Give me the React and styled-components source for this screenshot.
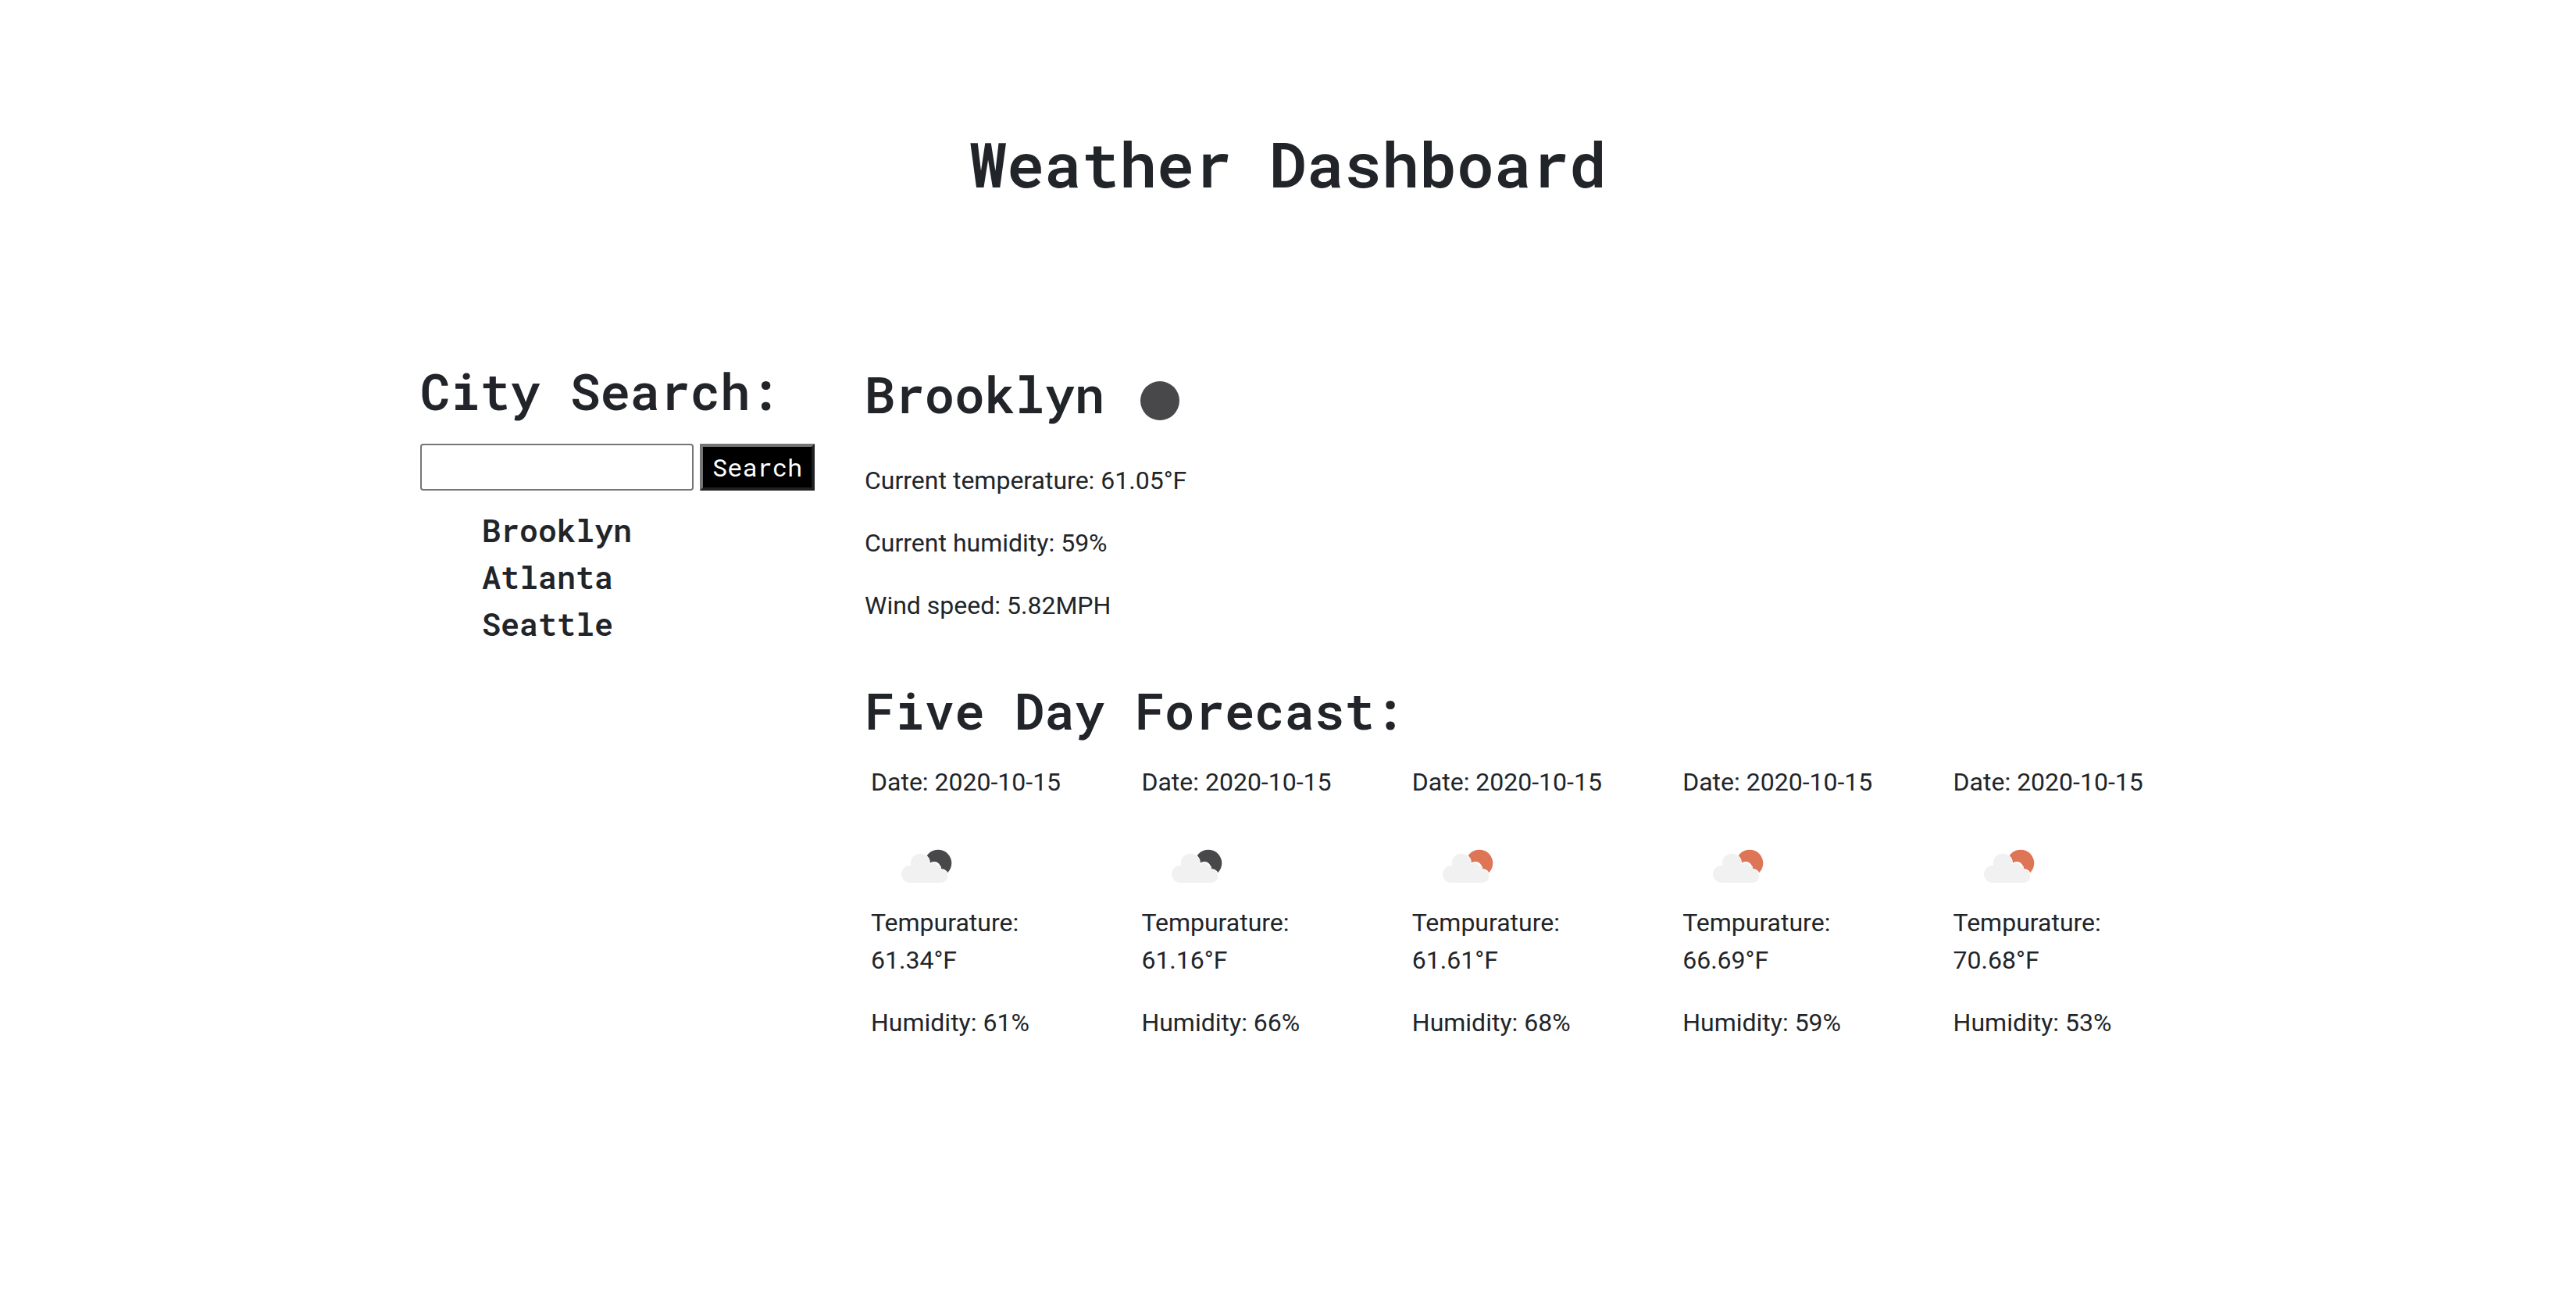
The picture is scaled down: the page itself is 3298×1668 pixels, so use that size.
import React, { useState } from "react";
import styled, { createGlobalStyle } from "styled-components";

const MONO = `"Roboto Mono", "DejaVu Sans Mono", monospace`;

const GlobalStyle = createGlobalStyle`
  *, *::before, *::after { box-sizing: border-box; }
  body {
    margin: 0;
    background: #fff;
    color: #212529;
    font-family: Roboto, sans-serif;
    font-size: 32px;
    line-height: 48px;
  }
  h1, h2, p, ul { margin: 0; padding: 0; }
`;

const PageHeader = styled.header`
  padding: 161px 32px 205px;
`;

const Title = styled.h1`
  font-family: ${MONO};
  font-size: 80px;
  font-weight: 600;
  line-height: 96px;
  text-align: center;
`;

const Container = styled.main`
  display: flex;
  max-width: 2280px;
  margin: 0 auto;
  padding: 0 2px 64px 29px;
`;

const Sidebar = styled.aside`
  flex: 0 0 569px;
`;

const Content = styled.div`
  flex: 1;
  min-width: 0;
`;

const Heading = styled.h2`
  font-family: ${MONO};
  font-size: 64px;
  font-weight: 600;
  line-height: 77px;
  margin-bottom: 29px;
`;

const SearchForm = styled.form`
  display: flex;
  gap: 8px;
  margin-bottom: 21px;
`;

const SearchInput = styled.input`
  width: 350px;
  height: 60px;
  padding: 2px 8px;
  border: 2px solid #767676;
  border-radius: 4px;
  background: #fff;
  color: inherit;
  font: inherit;
`;

const SearchButton = styled.button`
  height: 60px;
  padding: 0 12px;
  border: 4px solid;
  border-color: #767676 #212121 #212121 #767676;
  border-radius: 0;
  background: #000;
  color: #fff;
  font-family: ${MONO};
  font-size: 32px;
  line-height: 48px;
  cursor: pointer;
`;

const CityList = styled.ul`
  padding-left: 79px;
  list-style: none;
`;

const CityItem = styled.li`
  font-family: ${MONO};
  font-size: 40px;
  font-weight: 600;
  line-height: 60px;
`;

const CurrentWeather = styled.section`
  margin-bottom: 72px;
`;

const Reading = styled.p`
  margin-bottom: ${(p) => (p.$last ? 0 : 32)}px;
`;

const WeatherImage = styled.svg`
  width: 100px;
  height: 100px;
  margin-left: 21px;
  vertical-align: middle;
`;

const ForecastGrid = styled.div`
  display: grid;
  grid-template-columns: repeat(5, minmax(0, 1fr));
  column-gap: 60px;
  padding-left: 8px;
`;

const DayIcon = styled(WeatherImage)`
  display: block;
`;

const NIGHT = "#48484a";
const DAY = "#dd7556";

function CloudIcon({ night }) {
  return (
    <DayIcon viewBox="0 0 100 100" aria-hidden="true">
      <circle cx="65" cy="48" r="17.3" fill={night ? NIGHT : DAY} />
      <g stroke="#fff" strokeWidth="2" fill="#fff">
        <circle cx="42" cy="48" r="12" />
        <circle cx="60" cy="54.5" r="7.5" />
        <circle cx="69" cy="64.5" r="8.5" />
      </g>
      <g fill="#f1f1f1">
        <circle cx="29" cy="62" r="11" />
        <circle cx="42" cy="48" r="12.2" />
        <circle cx="59" cy="55.5" r="7.5" />
        <circle cx="68.8" cy="64.5" r="8.5" />
        <rect x="29" y="52" width="40" height="21" />
      </g>
    </DayIcon>
  );
}

const cities = ["Brooklyn", "Atlanta", "Seattle"];

const forecast = [
  { date: "2020-10-15", temp: "61.34", humidity: 61, night: true },
  { date: "2020-10-15", temp: "61.16", humidity: 66, night: true },
  { date: "2020-10-15", temp: "61.61", humidity: 68, night: false },
  { date: "2020-10-15", temp: "66.69", humidity: 59, night: false },
  { date: "2020-10-15", temp: "70.68", humidity: 53, night: false },
];

export default function App() {
  const [query, setQuery] = useState("");

  return (
    <>
      <GlobalStyle />
      <PageHeader>
        <Title>Weather Dashboard</Title>
      </PageHeader>
      <Container>
        <Sidebar>
          <Heading>
            <label htmlFor="city">City Search:</label>
          </Heading>
          <SearchForm onSubmit={(e) => e.preventDefault()}>
            <SearchInput
              id="city"
              type="text"
              value={query}
              onChange={(e) => setQuery(e.target.value)}
            />
            <SearchButton type="submit">Search</SearchButton>
          </SearchForm>
          <CityList>
            {cities.map((city) => (
              <CityItem key={city}>{city}</CityItem>
            ))}
          </CityList>
        </Sidebar>
        <Content>
          <CurrentWeather>
            <Heading>
              Brooklyn
              <WeatherImage viewBox="0 0 100 100" aria-hidden="true">
                <circle cx="50" cy="51" r="25" fill={NIGHT} />
              </WeatherImage>
            </Heading>
            <Reading>Current temperature: 61.05°F</Reading>
            <Reading>Current humidity: 59%</Reading>
            <Reading $last>Wind speed: 5.82MPH</Reading>
          </CurrentWeather>
          <section>
            <Heading>Five Day Forecast:</Heading>
            <ForecastGrid>
              {forecast.map((day, i) => (
                <article key={i}>
                  <Reading>Date: {day.date}</Reading>
                  <CloudIcon night={day.night} />
                  <Reading>Tempurature: {day.temp}°F</Reading>
                  <Reading $last>Humidity: {day.humidity}%</Reading>
                </article>
              ))}
            </ForecastGrid>
          </section>
        </Content>
      </Container>
    </>
  );
}
